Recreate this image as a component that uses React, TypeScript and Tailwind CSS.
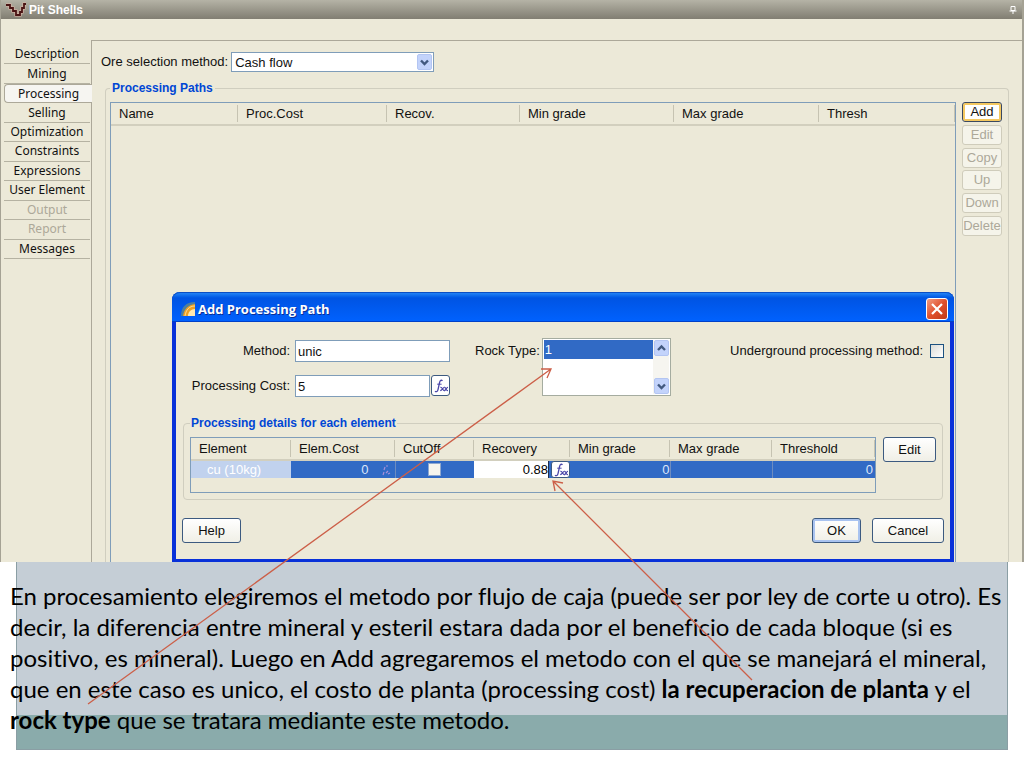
import React from "react";

const tabs = [
  { name: "Description" },
  { name: "Mining" },
  { name: "Processing", active: true },
  { name: "Selling" },
  { name: "Optimization" },
  { name: "Constraints" },
  { name: "Expressions" },
  { name: "User Element" },
  { name: "Output", disabled: true },
  { name: "Report", disabled: true },
  { name: "Messages" },
];

const pathColumns = [
  { name: "Name", width: "w-[127px]" },
  { name: "Proc.Cost", width: "w-[149px]" },
  { name: "Recov.", width: "w-[133px]" },
  { name: "Min grade", width: "w-[154px]" },
  { name: "Max grade", width: "w-[145px]" },
  { name: "Thresh", width: "" },
];

const elementColumns = [
  { name: "Element", width: "w-[100px]" },
  { name: "Elem.Cost", width: "w-[104px]" },
  { name: "CutOff", width: "w-[79px]" },
  { name: "Recovery", width: "w-[96px]" },
  { name: "Min grade", width: "w-[100px]" },
  { name: "Max grade", width: "w-[102px]" },
  { name: "Threshold", width: "" },
];

const pathActions = ["Add", "Edit", "Copy", "Up", "Down", "Delete"];

const noteLines = [
  <>En procesamiento elegiremos el metodo por flujo de caja (puede ser por ley de corte u otro). Es</>,
  <>decir, la diferencia entre mineral y esteril estara dada por el beneficio de cada bloque (si es</>,
  <>positivo, es mineral). Luego en Add agregaremos el metodo con el que se manejará el mineral,</>,
  <>que en este caso es unico, el costo de planta (processing cost) <b>la recuperacion de planta</b> y el</>,
  <><b>rock type</b> que se tratara mediante este metodo.</>,
];

function Chevron({ up = false }: { up?: boolean }) {
  return (
    <svg viewBox="0 0 15 16" className="h-4 w-[15px]" aria-hidden="true">
      <rect x="0.5" y="0.5" width="14" height="15" rx="1.5" fill="#c3d3fb" stroke="#b3c5f2" />
      <path d={up ? "M4 10l3.5-3.5L11 10" : "M4 6.5L7.5 10 11 6.5"} fill="none" stroke="#42597f" strokeWidth="2.4" />
    </svg>
  );
}

function FxIcon() {
  return (
    <svg viewBox="0 0 16 16" className="h-4 w-4" fill="none" stroke="#4a46a8" aria-hidden="true">
      <path d="M9.4 3C8.5 1.6 7 2.4 6.6 4.4L5 11.6C4.6 13.4 3.2 14.2 2 13.2" strokeWidth="1.3" />
      <path d="M4.2 6.2h4.4" strokeWidth="1" />
      <path d="M7.4 9.4c2.4-.6 2 3.8 4.4 3.2M7.2 12.6c2.2 0 2.4-3.2 4.4-3.2" strokeWidth="1.1" />
      <path d="M11.4 9.4c2-.4 1 3.6 3.6 3.2M11.2 12.6c2 0 2-3.4 3.8-3.2" strokeWidth="1.1" />
    </svg>
  );
}

function Button({ label, className = "" }: { label: string; className?: string }) {
  return (
    <button
      className={`h-[25px] rounded-[3px] border border-[#3c5a80] bg-linear-to-b from-white to-[#f0efe6] ${className}`}
    >
      {label}
    </button>
  );
}

function HeaderRow({ columns }: { columns: typeof pathColumns }) {
  return (
    <thead>
      <tr className="h-[22px] border-b-2 border-[#d2cfbe]">
        {columns.map((col) => (
          <th key={col.name} className={`${col.width} p-0 text-left font-normal`}>
            <div className="border-r border-[#c6c3b2] pl-2 leading-[17px]">{col.name}</div>
          </th>
        ))}
      </tr>
    </thead>
  );
}

function AddPathDialog() {
  return (
    <div
      role="dialog"
      aria-labelledby="dialog-title"
      className="absolute bottom-0 left-[171px] right-[68px] rounded-t-lg border-x-4 border-b-[3px] border-[#0831d9] bg-[#ece9d8]"
    >
      <div className="-mx-1 flex h-[30px] items-center rounded-t-lg bg-linear-to-b from-[#2a8bf8] via-[#0054e3] via-20% to-[#0062ff] pl-[9px] pr-[6px] shadow-[inset_0_1px_0_#0b4fc4,inset_0_-1px_0_#0040c8]">
        <svg viewBox="0 0 15 15" className="mt-1 h-[15px] w-[15px]" aria-hidden="true">
          <path d="M0 14C0 5 5 0 14 0v14z" fill="#4f7f9c" />
          <path d="M2 14C3 7 7 3 14 2v12z" fill="#f0a020" />
          <path d="M7 14c0-4 3-7 7-7v7z" fill="#ffe9b0" />
          <path d="M4 14C5 8 8 4 14 4" fill="none" stroke="#ffe9b0" strokeWidth="0.8" />
        </svg>
        <h2
          id="dialog-title"
          className="ml-[2px] mt-[5px] font-['Open_Sans',sans-serif] text-[13px] font-bold text-white [text-shadow:1px_1px_0_#0a2f96]"
        >
          Add Processing Path
        </h2>
        <button
          aria-label="Close"
          className="ml-auto mt-1 h-[22px] w-[22px] rounded-[3px] border border-white bg-linear-to-br from-[#f09a80] via-[#e0502c] to-[#c03a18]"
        >
          <svg viewBox="0 0 20 20" className="h-5 w-5" aria-hidden="true">
            <path d="M5 5l10 10M15 5L5 15" stroke="#fff" strokeWidth="2.2" />
          </svg>
        </button>
      </div>

      <div className="px-[6px] pb-4 pt-4">
        <div className="flex items-start">
          <div className="ml-2 grid grid-cols-[100px_155px] gap-x-[5px] gap-y-[13px] pt-[2px]">
            <label htmlFor="method" className="text-right leading-[22px]">Method:</label>
            <input
              id="method"
              defaultValue="unic"
              className="h-[22px] min-w-0 border border-[#7f9db9] bg-white pl-[2px]"
            />
            <label htmlFor="cost" className="text-right leading-[22px]">Processing Cost:</label>
            <div className="flex gap-px">
              <input
                id="cost"
                defaultValue="5"
                className="h-[22px] min-w-0 flex-1 border border-[#7f9db9] bg-white pl-[2px]"
              />
              <button
                aria-label="Processing cost formula"
                className="flex h-[21px] w-[19px] items-center justify-center rounded-[3px] border border-[#3c5a80] bg-white"
              >
                <FxIcon />
              </button>
            </div>
          </div>

          <label htmlFor="rock-type" className="ml-[25px] mt-1 leading-[18px]">Rock Type:</label>
          <div className="ml-[2px] flex h-[58px] w-[129px] border border-[#a5aca0] bg-white p-px">
            <select
              id="rock-type"
              size={3}
              defaultValue="1"
              className="min-w-0 flex-1 appearance-none overflow-hidden bg-white outline-none"
            >
              <option
                value="1"
                className="h-[19px] px-px pb-0 pt-[2px] leading-[18px] text-white checked:bg-[linear-gradient(#316ac5,#316ac5)] checked:text-white"
              >
                1
              </option>
            </select>
            <div className="flex w-4 flex-col justify-between bg-[#f6f5f0] pl-px">
              <Chevron up />
              <Chevron />
            </div>
          </div>

          <label htmlFor="underground" className="ml-auto mt-1 leading-[18px]">
            Underground processing method:
          </label>
          <input
            id="underground"
            type="checkbox"
            className="ml-[7px] mt-[6px] h-[14px] w-[14px] appearance-none border border-[#1c5180] bg-linear-to-br from-[#dcdcd7] to-white"
          />
        </div>

        <fieldset className="mx-px mt-[18px] min-w-0 rounded-[4px] border border-[#d0cebf] px-[6px] pb-[6px]">
          <legend className="px-px text-[12px] font-bold leading-4 text-[#0046d5]">
            Processing details for each element
          </legend>
          <div className="flex items-start gap-[7px] pt-[6px]">
            <div className="h-[56px] min-w-0 flex-1 border border-[#7f9db9]">
              <table className="w-full table-fixed border-collapse">
                <HeaderRow columns={elementColumns} />
                <tbody>
                  <tr className="h-[17px] bg-[#316ac5] leading-[17px] text-[#dbe6fa]">
                    <td className="bg-[#c1d2ee] p-0 pl-4 text-white">cu (10kg)</td>
                    <td className="border-r border-[#6d8cc0] p-0">
                      <div className="flex items-center justify-end gap-3 pr-1">
                        0
                        <svg viewBox="0 0 10 12" className="h-3 w-[10px]" aria-hidden="true">
                          <path d="M2 11l1-3M3 6l1-3M5 2h2M5 9l2-2M7 10l2-1" stroke="#a890d8" strokeWidth="1.2" />
                        </svg>
                      </div>
                    </td>
                    <td className="p-0 text-center">
                      <input
                        type="checkbox"
                        aria-label="CutOff"
                        className="mx-auto block h-[13px] w-[13px] appearance-none border border-[#8fa8cf] bg-[#f6f5ee]"
                      />
                    </td>
                    <td className="p-0">
                      <div className="flex">
                        <input
                          aria-label="Recovery"
                          defaultValue="0.88"
                          className="h-[17px] min-w-0 flex-1 border-r border-[#22304c] bg-white text-right text-black"
                        />
                        <button
                          aria-label="Recovery formula"
                          className="ml-[2px] flex h-[17px] w-[19px] items-center justify-center rounded-[3px] border border-[#3c5a80] bg-white"
                        >
                          <FxIcon />
                        </button>
                      </div>
                    </td>
                    <td className="border-r border-[#6d8cc0] p-0 text-right">0</td>
                    <td className="border-r border-[#6d8cc0] p-0"></td>
                    <td className="p-0 pr-[2px] text-right">0</td>
                  </tr>
                </tbody>
              </table>
            </div>
            <Button label="Edit" className="w-[53px]" />
          </div>
        </fieldset>

        <div className="mt-[18px] flex">
          <Button label="Help" className="w-[59px]" />
          <Button label="OK" className="ml-auto w-[49px] shadow-[inset_0_0_0_2px_#a9c3f0]" />
          <Button label="Cancel" className="ml-[11px] w-[72px]" />
        </div>
      </div>
    </div>
  );
}

export default function App() {
  return (
    <div className="relative min-h-screen overflow-hidden bg-white font-['Liberation_Sans',Arial,sans-serif] text-[13px] text-[#111]">
      <div className="relative border-l border-r-2 border-[#a5a294] bg-[#ece9d8]">
        <header className="flex h-[19px] items-center bg-linear-to-b from-[#b5b3a6] to-[#817e72] pl-1 pr-[5px] text-white">
          <svg viewBox="0 0 22 16" className="h-4 w-[22px]" fill="none" aria-hidden="true">
            <path d="M1 3h4v3h3v3h3v4h4v-3h2V6h2V2h2" stroke="#e0b8a8" strokeWidth="3" />
            <path d="M1 3h4v3h3v3h3v4h4v-3h2V6h2V2h2" stroke="#4a1414" strokeWidth="1.8" />
          </svg>
          <h1 className="ml-[2px] text-[12px] font-bold">Pit Shells</h1>
          <svg viewBox="0 0 8 8" className="ml-auto h-2 w-2" fill="none" stroke="#fff" aria-hidden="true">
            <path d="M2 0.5h4v4H2zM0.5 5h7M4 5v3" />
          </svg>
        </header>

        <div className="flex pt-[21px]">
          <nav className="mt-[5px] grid h-[214px] w-[90px] auto-rows-fr pl-[3px] font-['Noto_Sans','Open_Sans',sans-serif] text-[12px]">
            {tabs.map((tab) => (
              <button
                key={tab.name}
                disabled={tab.disabled}
                className={`z-10 min-h-0 whitespace-nowrap border-b leading-4 ${
                  tab.active
                    ? "-mr-px rounded-l-[4px] border-y border-l border-[#aca899] bg-[#f6f5f1]"
                    : "mr-px border-[#b5b2a2]"
                } ${tab.disabled ? "text-[#aca899]" : ""}`}
              >
                {tab.name}
              </button>
            ))}
          </nav>

          <main className="min-w-0 flex-1 border-l border-t border-[#aca899] pt-[11px]">
            <div className="flex items-center gap-[3px] pl-[9px]">
              <label htmlFor="ore-method">Ore selection method:</label>
              <div className="relative">
                <select
                  id="ore-method"
                  className="block h-5 w-[203px] appearance-none border border-[#7f9db9] bg-white pl-[3px]"
                >
                  <option>Cash flow</option>
                </select>
                <span className="pointer-events-none absolute right-[2px] top-[2px]">
                  <Chevron />
                </span>
              </div>
            </div>

            <fieldset className="mx-[13px] mt-2 min-w-0 rounded-t-[4px] border border-b-0 border-[#d0cebf] pl-1 pr-[6px]">
              <legend className="px-[2px] text-[12px] font-bold leading-4 text-[#0046d5]">Processing Paths</legend>
              <div className="flex items-start gap-[6px] pt-[6px]">
                <div className="min-h-[460px] min-w-0 flex-1 border border-b-0 border-[#7f9db9]">
                  <table className="w-full table-fixed border-collapse">
                    <HeaderRow columns={pathColumns} />
                  </table>
                </div>
                <div className="grid h-[134px] w-10 content-between">
                  {pathActions.map((action, i) => (
                    <button
                      key={action}
                      disabled={i > 0}
                      className={`h-5 rounded-[3px] border leading-[18px] ${
                        i === 0
                          ? "border-[#3c4a60] bg-white shadow-[inset_0_0_0_2px_#f4c860]"
                          : "border-[#cfccbb] bg-[#f5f4ea] text-[#aca899]"
                      }`}
                    >
                      {action}
                    </button>
                  ))}
                </div>
              </div>
            </fieldset>
          </main>
        </div>

        <AddPathDialog />
      </div>

      <section className="mx-4 border-x border-b border-[#8a9ea4] bg-[linear-gradient(#c5ced6_153px,#8aabab_153px)] pb-[14px] pt-[18px]">
        <p className="-ml-[7px] whitespace-nowrap font-['Lato',Calibri,sans-serif] text-[24px] leading-[31px] text-black [font-variant-ligatures:none]">
          {noteLines.map((line, i) => (
            <span key={i} className="block">{line}</span>
          ))}
        </p>
      </section>

      {/* arrows from the note to the rock type list and the recovery cell */}
      <svg
        viewBox="0 0 1024 768"
        className="pointer-events-none absolute left-0 top-0 h-[768px] w-[1024px]"
        fill="none"
        stroke="#cc5f48"
        strokeWidth="1.3"
        aria-hidden="true"
      >
        <path d="M88 704L551 369M541 369h10l-4 9" />
        <path d="M752 680L553 481M555 491l-2-10 10 2" />
      </svg>
    </div>
  );
}
